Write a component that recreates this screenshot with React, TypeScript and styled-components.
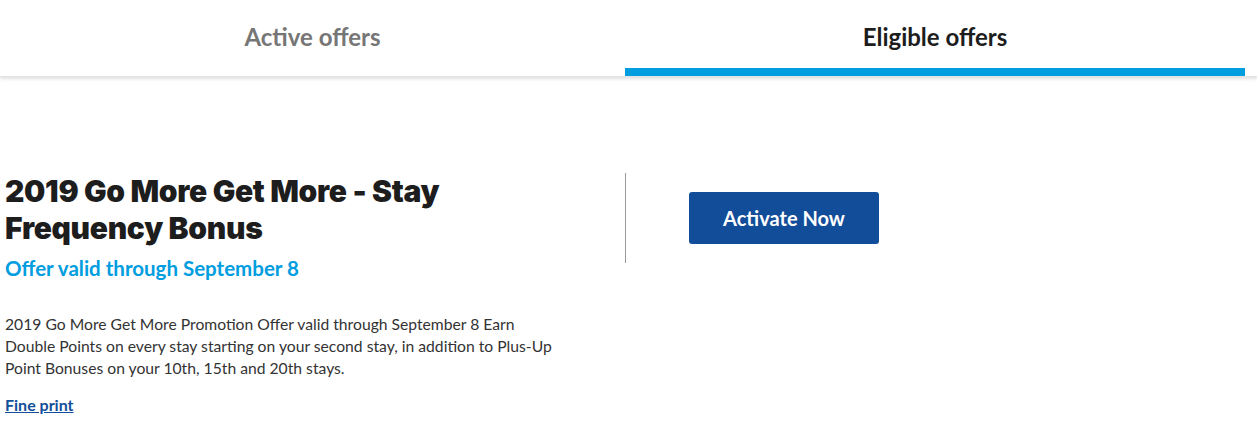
import styled, { createGlobalStyle } from "styled-components";

const GlobalStyle = createGlobalStyle`
  body {
    margin: 0;
    background: #fff;
    font-family: "Lato", "Liberation Sans", sans-serif;
    color: #222;
  }
`;

const TabBar = styled.div`
  box-shadow: 0 2px 3px rgba(0, 0, 0, 0.12);
  border-bottom: 1px solid #e2e2e2;
`;
const TabList = styled.div`
  display: flex;
  height: 76px;
`;
const Tab = styled.button<{ $active?: boolean; $width: number }>`
  width: ${(p) => p.$width}px;
  background: none;
  border: none;
  border-bottom: 8px solid ${(p) => (p.$active ? "#009ddf" : "transparent")};
  padding: 5px 0 0;
  font-family: inherit;
  font-size: 24px;
  font-weight: 700;
  color: ${(p) => (p.$active ? "#1d1d1d" : "#767676")};
  cursor: pointer;
`;

const OfferRow = styled.section`
  display: flex;
  margin-top: 96px;
  padding-left: 5px;
`;
const LeftCol = styled.div`
  width: 620px;
`;
const Title = styled.h2`
  margin: 0;
  font-family: "Inter", "Lato", sans-serif;
  font-weight: 900;
  font-size: 30px;
  line-height: 37px;
  letter-spacing: -0.3px;
  color: #1d1d1d;
  width: 480px;
`;
const Validity = styled.p`
  margin: 8px 0 0;
  font-size: 20.5px;
  font-weight: 700;
  color: #009ddf;
  line-height: 26px;
`;
const Description = styled.p`
  margin: 32px 0 0;
  font-size: 15.7px;
  line-height: 22px;
  color: #333;
  width: 558px;
`;
const FinePrint = styled.a`
  display: inline-block;
  margin-top: 16px;
  font-size: 16px;
  font-weight: 700;
  color: #134e9a;
  text-decoration: underline;
  cursor: pointer;
`;
const Divider = styled.div`
  width: 1px;
  height: 90px;
  background: #999;
`;
const Actions = styled.div`
  padding: 19px 0 0 63px;
`;
const ActivateButton = styled.button`
  width: 190px;
  height: 52px;
  border: none;
  border-radius: 3px;
  background: #124d99;
  color: #fff;
  font-family: inherit;
  font-size: 20px;
  font-weight: 700;
  cursor: pointer;
`;

export default function App() {
  return (
    <>
      <GlobalStyle />
      <TabBar>
        <TabList>
          <Tab $width={625}>Active offers</Tab>
          <Tab $width={620} $active>
            Eligible offers
          </Tab>
        </TabList>
      </TabBar>
      <OfferRow>
        <LeftCol>
          <Title>2019 Go More Get More - Stay Frequency Bonus</Title>
          <Validity>Offer valid through September 8</Validity>
          <Description>
            2019 Go More Get More Promotion Offer valid through September 8 Earn
            Double Points on every stay starting on your second stay, in
            addition to Plus-Up Point Bonuses on your 10th, 15th and 20th stays.
          </Description>
          <FinePrint>Fine print</FinePrint>
        </LeftCol>
        <Divider />
        <Actions>
          <ActivateButton>Activate Now</ActivateButton>
        </Actions>
      </OfferRow>
    </>
  );
}
